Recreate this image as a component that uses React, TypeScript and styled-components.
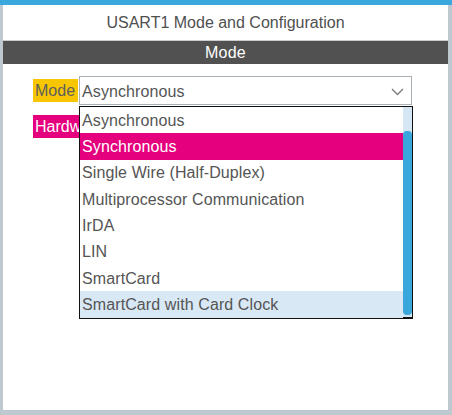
import styled, { createGlobalStyle } from "styled-components";

const GlobalStyle = createGlobalStyle`
  html, body {
    margin: 0;
    padding: 0;
    background: #bec8cf;
  }
  body {
    font-family: "Liberation Sans", Arial, sans-serif;
  }
`;

const Frame = styled.div`
  width: 452px;
  height: 415px;
  display: flex;
  flex-direction: column;
  background: #bec8cf;
  overflow: hidden;
`;

const TopBar = styled.div`
  height: 5px;
  background: #3aa8dc;
`;

const Panel = styled.div`
  margin-left: 3px;
  width: 445px;
  height: 405px;
  background: #ffffff;
  display: flex;
  flex-direction: column;
`;

const Title = styled.div`
  height: 36px;
  padding-top: 1px;
  box-sizing: border-box;
  border-bottom: 1px solid #c9cdd0;
  display: flex;
  align-items: center;
  justify-content: center;
  font-size: 16px;
  color: #505050;
`;

const SectionBar = styled.div`
  height: 23px;
  background: #505150;
  color: #ffffff;
  font-size: 16px;
  letter-spacing: 0.2px;
  display: flex;
  align-items: center;
  justify-content: center;
`;

const Content = styled.div`
  position: relative;
  padding: 12px 0 0 30px;
  display: flex;
  flex-direction: column;
  gap: 7px;
`;

const Row = styled.div`
  display: flex;
  align-items: center;
  height: 29px;
  gap: 1px;
`;

const Label = styled.div<{ $bg: string; $fg: string }>`
  height: 23px;
  padding: 1px 3px 0 2px;
  box-sizing: border-box;
  display: flex;
  align-items: center;
  background: ${(p) => p.$bg};
  color: ${(p) => p.$fg};
  font-size: 16px;
  white-space: nowrap;
`;

const SelectBox = styled.div`
  position: relative;
  box-sizing: border-box;
  width: 333px;
  height: 29px;
  border: 1px solid #a9b0b6;
  display: flex;
  align-items: center;
  justify-content: space-between;
  padding: 2px 7px 0 2px;
  font-size: 16px;
  letter-spacing: 0.1px;
  color: #555555;
`;

const List = styled.div`
  position: absolute;
  top: 29px;
  left: -1px;
  box-sizing: border-box;
  width: 334px;
  height: 213px;
  background: #ffffff;
  border: 1px solid #111111;
  border-bottom-width: 2px;
  display: flex;
  z-index: 2;
`;

const Items = styled.div`
  flex: 1;
  display: flex;
  flex-direction: column;
`;

const Item = styled.div<{ $state?: "selected" | "hover" }>`
  height: 26.33px;
  flex-shrink: 0;
  display: flex;
  align-items: center;
  padding: 1px 0 0 2px;
  box-sizing: border-box;
  font-size: 16px;
  letter-spacing: 0.1px;
  white-space: nowrap;
  background: ${(p) =>
    p.$state === "selected" ? "#e5007d" : p.$state === "hover" ? "#d9e8f5" : "transparent"};
  color: ${(p) => (p.$state === "selected" ? "#ffffff" : "#555555")};
`;

const Track = styled.div`
  width: 9px;
  background: #d5e6f4;
  display: flex;
  flex-direction: column;
  padding-top: 24px;
  padding-bottom: 2px;
`;

const Thumb = styled.div`
  flex: 1;
  background: #39a6dc;
  border-radius: 4px;
`;

const options = [
  "Asynchronous",
  "Synchronous",
  "Single Wire (Half-Duplex)",
  "Multiprocessor Communication",
  "IrDA",
  "LIN",
  "SmartCard",
  "SmartCard with Card Clock",
];

function Chevron() {
  return (
    <svg width="13" height="8" viewBox="0 0 13 8">
      <path d="M1 1 L6.5 6.5 L12 1" fill="none" stroke="#7a7a7a" strokeWidth="1.3" />
    </svg>
  );
}

export default function App() {
  return (
    <>
      <GlobalStyle />
      <Frame>
        <TopBar />
        <Panel>
          <Title>USART1 Mode and Configuration</Title>
          <SectionBar>Mode</SectionBar>
          <Content>
            <Row>
              <Label $bg="#f7c600" $fg="#5e5e5e">
                Mode
              </Label>
              <SelectBox>
                <span>Asynchronous</span>
                <Chevron />
                <List>
                  <Items>
                    {options.map((o, i) => (
                      <Item
                        key={o}
                        $state={i === 1 ? "selected" : i === 7 ? "hover" : undefined}
                      >
                        {o}
                      </Item>
                    ))}
                  </Items>
                  <Track>
                    <Thumb />
                  </Track>
                </List>
              </SelectBox>
            </Row>
            <Row>
              <Label $bg="#e5007d" $fg="#ffffff">
                Hardware Flow Control (RS232)
              </Label>
            </Row>
          </Content>
        </Panel>
      </Frame>
    </>
  );
}
